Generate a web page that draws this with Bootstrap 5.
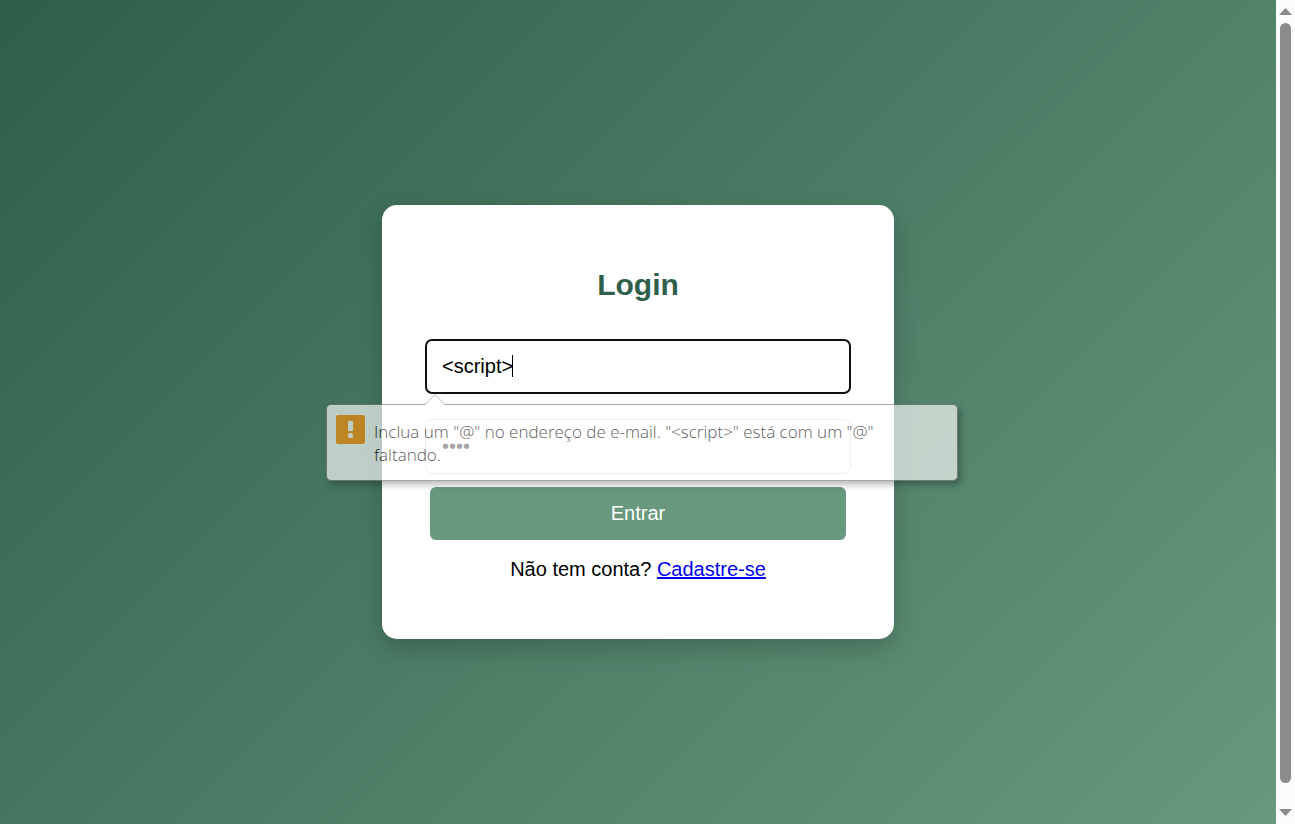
<!DOCTYPE html>
<html lang="pt-BR">
<head>
<meta charset="utf-8">
<meta name="viewport" content="width=device-width, initial-scale=1">
<title>Login</title>
<link href="https://cdn.jsdelivr.net/npm/bootstrap@5.3.0/dist/css/bootstrap.min.css" rel="stylesheet">
<style>
  body { font-family: "Liberation Sans", Arial, sans-serif; font-size: 20px; line-height: 24px; color: #000; }
  .page-area { background: linear-gradient(135deg, #2f5f4a, #68997f); padding-top: 20px; }
  .login-card { max-width: 512px; padding: 61px 43px 58px; border-radius: 15px; box-shadow: 0 10px 25px rgba(0, 0, 0, .2); }
  .login-title { font-size: 30px; line-height: 38px; color: #2f5f4a; margin-bottom: 35px; }
  .login-field { height: 55px; padding: 0 16px; border: 1px solid #ccc; border-radius: 7px; font-size: 20px; line-height: 24px; color: #000; }
  .login-field:focus, .login-field.is-active { border: 2px solid #101010; padding: 0 15px; box-shadow: none; }
  .field-group { margin-bottom: 25px; }
  .password-group { margin-bottom: 13px; }
  .text-caret { left: 87px; top: 16px; width: 1px; height: 22px; background: #000; }
  .btn-enter { height: 53px; padding: 0 12px 2px; border: 0; border-radius: 6px; background: #68997f; color: #fff; font-size: 20px; line-height: 24px; }
  .button-row { padding: 0 5px; margin-bottom: 17px; }
  .signup-link { color: #0000ee; }
  .hint { left: -99px; top: 65px; width: 632px; max-width: 100vw; min-height: 77px; padding: 10px 60px 10px 9px; gap: 9px;
    background: #fff; border: 1px solid #777; border-radius: 5px; opacity: .65; box-shadow: 3px 4px 6px rgba(0, 0, 0, .4); z-index: 5; }
  .hint-text { font-family: "Open Sans", "Noto Sans", sans-serif; font-weight: 350; font-size: 17px; line-height: 23px; padding-top: 5px; }
  .hint-arrow { left: 98px; top: -11px; }
  .scroll-strip { width: 19px; background: #fcfcfc; padding: 8px 0; }
  .scroll-thumb { width: 11px; background: #8b8b8b; border-radius: 6px; margin: 8px 0 26px; }
</style>
</head>
<body class="vh-100 d-flex overflow-hidden">
<main class="page-area flex-grow-1 d-flex align-items-center justify-content-center">
  <form class="login-card w-100 bg-white text-center" novalidate>
    <h1 class="login-title fw-bold">Login</h1>
    <div class="field-group position-relative">
      <input type="email" class="login-field is-active form-control" aria-label="E-mail" aria-describedby="email-hint" value="&lt;script&gt;">
      <span class="text-caret position-absolute"></span>
      <div class="hint position-absolute d-flex text-start" id="email-hint" role="alert">
        <svg class="hint-arrow position-absolute" width="20" height="11" viewBox="0 0 20 11" aria-hidden="true"><path d="M0 11L10 1L20 11Z" fill="#fff"/><path d="M0 10.5L10 .7L20 10.5" fill="none" stroke="#999"/></svg>
        <svg class="flex-shrink-0" width="29" height="29" viewBox="0 0 29 29" aria-hidden="true"><rect width="29" height="29" rx="2" fill="#ff8f05"/><path d="M12 6h5v10h-5z" fill="#fff"/><circle cx="14.500" cy="20.500" r="2.600" fill="#fff"/></svg>
        <div class="hint-text">Inclua um "@" no endereço de e-mail. "&lt;script&gt;" está com um "@" faltando.</div>
      </div>
    </div>
    <div class="password-group">
      <input type="password" class="login-field form-control" aria-label="Senha" value="1234">
    </div>
    <div class="button-row"><button type="submit" class="btn btn-enter w-100">Entrar</button></div>
    <p class="mb-0">Não tem conta? <a class="signup-link" href="#">Cadastre-se</a></p>
  </form>
</main>
<div class="scroll-strip flex-shrink-0 d-flex flex-column align-items-center" aria-hidden="true">
  <svg class="flex-shrink-0" width="13" height="7" viewBox="0 0 13 7"><path d="M0 7L6.500 0L13 7Z" fill="#8b8b8b"/></svg>
  <div class="scroll-thumb flex-grow-1"></div>
  <svg class="flex-shrink-0" width="13" height="7" viewBox="0 0 13 7"><path d="M0 0L6.500 7L13 0Z" fill="#8b8b8b"/></svg>
</div>
<script src="https://cdn.jsdelivr.net/npm/bootstrap@5.3.0/dist/js/bootstrap.bundle.min.js"></script>
</body>
</html>
